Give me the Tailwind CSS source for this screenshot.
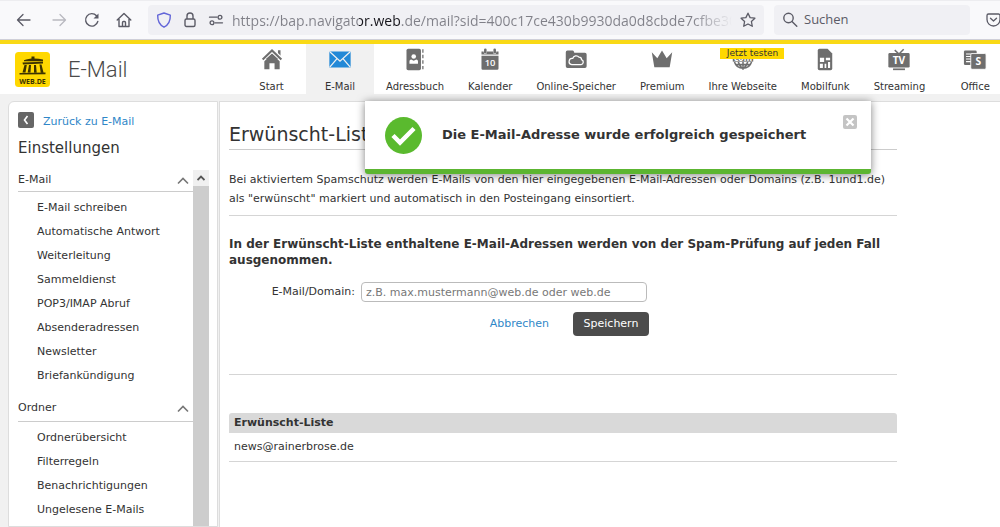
<!DOCTYPE html>
<html lang="de">
<head>
    <meta charset="UTF-8">
    <meta name="viewport" content="width=device-width, initial-scale=1.0">
    <title>E-Mail - Einstellungen</title>
    <script src="https://cdn.jsdelivr.net/npm/@tailwindcss/browser@4"></script>
</head>
<body class="flex flex-col h-screen overflow-hidden bg-[#f1f1f1] text-[#333] font-['DejaVu_Sans',sans-serif] text-[11px]">
    <!-- Browserleiste -->
    <div class="flex shrink-0 items-center h-10 pl-4 bg-[#f9f9fb] border-t border-b border-t-[#ededf0] border-b-[#cfcfd8] overflow-hidden text-[#5b5b66] font-['Open_Sans','Noto_Sans',sans-serif]">
        <button class="w-4 mr-5" aria-label="Zurück">
            <svg class="size-4" viewBox="0 0 16 16" fill="none" stroke="currentColor" stroke-width="1.3" stroke-linecap="round" stroke-linejoin="round"><path d="M14 8H1.5M7 2.5L1.5 8L7 13.500"/></svg>
        </button>
        <button class="w-4 mr-4 text-[#b9b9c0]" aria-label="Vor">
            <svg class="size-4" viewBox="0 0 16 16" fill="none" stroke="currentColor" stroke-width="1.3" stroke-linecap="round" stroke-linejoin="round"><path d="M1 8H13.500M8 2.500L13.500 8L8 13.500"/></svg>
        </button>
        <button class="w-4 mr-4" aria-label="Neu laden">
            <svg class="size-4" viewBox="0 0 16 16" fill="none" stroke="currentColor" stroke-width="1.4" stroke-linecap="round"><path d="M13.800 9.500A6.200 6.200 0 1 1 12.500 3.800"/><path d="M14.500 1.500V6.500H9.500Z" fill="currentColor" stroke="none"/></svg>
        </button>
        <button class="w-4 mr-4" aria-label="Startseite">
            <svg class="size-4" viewBox="0 0 16 16" fill="none" stroke="currentColor" stroke-width="1.4" stroke-linecap="round" stroke-linejoin="round"><path d="M1.200 8L8 1.500L14.800 8M3 7V14.500H13V7M6.500 14.500V10.500a1 1 0 0 1 1-1h1a1 1 0 0 1 1 1v4"/></svg>
        </button>
        <div class="flex flex-1 items-center h-[30px] px-2 rounded bg-[#f0f0f4]">
            <svg class="w-4 h-4 mr-3" viewBox="0 0 16 16" fill="none" stroke="#6265d8" stroke-width="1.4" stroke-linejoin="round"><path d="M8 1L14.300 3.200C14.500 8.500 12.500 12.800 8 15.200C3.500 12.800 1.500 8.500 1.700 3.200Z"/></svg>
            <svg class="w-3 h-4 mr-3" viewBox="0 0 12 16" fill="none" stroke="currentColor" stroke-width="1.4"><rect x="1" y="7" width="10" height="7.500" rx="1.500"/><path d="M3 7V4a3 3 0 0 1 6 0v3"/></svg>
            <svg class="w-4 h-4 mr-2" viewBox="0 0 16 16" fill="none" stroke="currentColor" stroke-width="1.300" stroke-linecap="round"><path d="M1.500 5.200H9M7 10.800H14.500"/><circle cx="12" cy="5.200" r="1.900"/><circle cx="4" cy="10.800" r="1.900"/></svg>
            <input type="text" aria-label="Adresse" value="https://bap.navigator.web.de/mail?sid=400c17ce430b9930da0d8cbde7cfbe30d9bfbae21" class="flex-1 min-w-0 h-6 text-[14px] outline-none text-transparent bg-clip-text bg-[linear-gradient(90deg,#808088_127px,#15141a_127px,#15141a_168px,#808088_168px,#808088_460px,transparent_500px)]">
            <button class="w-4 ml-1" aria-label="Lesezeichen">
                <svg class="size-4" viewBox="0 0 16 16" fill="none" stroke="currentColor" stroke-width="1.300" stroke-linejoin="round"><path d="M8 1.200L10.100 5.600L14.900 6.200L11.400 9.500L12.300 14.300L8 12L3.700 14.300L4.600 9.500L1.100 6.200L5.900 5.600Z"/></svg>
            </button>
        </div>
        <label class="flex items-center w-[196px] h-[30px] ml-[10px] pl-2 rounded bg-[#f0f0f4]">
            <svg class="size-4 mr-[6px]" viewBox="0 0 16 16" fill="none" stroke="currentColor" stroke-width="1.400" stroke-linecap="round"><circle cx="6.500" cy="6" r="4.700"/><path d="M10 9.500L14.800 14.300"/></svg>
            <input type="text" aria-label="Suche" placeholder="Suchen" class="w-32 text-[13px] outline-none placeholder:text-[#5b5b66]">
        </label>
        <button class="w-[14px] ml-4 overflow-hidden" aria-label="Pocket">
            <svg class="w-4 h-4" viewBox="0 0 16 16" fill="none" stroke="currentColor" stroke-width="1.300" stroke-linecap="round" stroke-linejoin="round"><path d="M2.500 2H12.500a1.500 1.500 0 0 1 1.500 1.500V7.500a6.500 6.500 0 0 1-13 0V3.500A1.500 1.500 0 0 1 2.500 2ZM4.500 6.200L7.500 9L10.500 6.200"/></svg>
        </button>
    </div>

    <!-- Kopfbereich -->
    <header class="flex shrink-0 h-[54px] bg-white border-t-4 border-[#f9d916] overflow-hidden">
        <div class="flex items-center w-[237px] shrink-0 pl-[15px]">
            <a href="#" aria-label="WEB.DE">
                <svg class="size-[35px]" viewBox="0 0 35 35"><rect width="35" height="35" rx="3.500" fill="#ffd800"/><g fill="#3c3200"><path d="M16.500 4.500h3v2h-3zM9 8.200C14 6 22 6 28 7.500V9.200H9zM7.500 10.500L28 9.700V11.600L8 12.600zM9.500 13H11.800L10.500 20.500H7.500zM14 13H16L15.500 20.500H12.700zM19 13H21L21.700 20.500H19zM24.500 12.500H26.500L28.500 20.500H25.700zM4.500 21L30.500 20.400V22.200L4.500 22.600z"/></g><text x="17.500" y="31.500" text-anchor="middle" font-family="Open Sans" font-weight="700" font-size="7" fill="#3c3200">WEB.DE</text></svg>
            </a>
            <span class="ml-[18px] font-['Roboto',sans-serif] font-light text-[22px] text-[#4a4a4a]">E-Mail</span>
        </div>
        <nav class="flex shrink-0 text-[10px] text-[#333]">
            <a href="#" class="flex flex-col items-center min-w-[69px] px-3 pt-1">
                <svg class="w-[26px] h-[27px] mb-2" viewBox="0 0 26 27" fill="#6e6e6e"><path d="M20 2.500h3v7l-3-3zM1.500 13L13 2.500L24.500 13" /><path d="M13 5.500L24.500 16L26 14" fill="none"/><path d="M1.500 13.500L13 3L24.500 13.500" fill="none" stroke="#fff" stroke-width="5"/><path d="M2 13.500L13 3L24 13.500" fill="none" stroke="#6e6e6e" stroke-width="2.500"/><path d="M4 15.500L13 7L22 15.500V25H16V18H10V25H4z"/></svg>
                <span>Start</span>
            </a>
            <a href="#" class="flex flex-col items-center min-w-[68px] px-3 pt-1 bg-[#f1f1f1]">
                <svg class="w-[26px] h-[27px] mb-2" viewBox="0 0 26 27"><rect x="0.500" y="4" width="25" height="19" rx="1" fill="#2389d7"/><path d="M1 4.500L13 15.500L25 4.500M1 22.500L9.500 12.500M25 22.500L16.500 12.500" fill="none" stroke="#f1f1f1" stroke-width="1.500"/></svg>
                <span>E-Mail</span>
            </a>
            <a href="#" class="flex flex-col items-center px-3 pt-1">
                <svg class="w-[26px] h-[27px] mb-2" viewBox="0 0 26 27" fill="#6e6e6e"><rect x="3" y="1" width="17" height="25" rx="2"/><path d="M21.500 1.500h1.500v4h-1.500zM21.500 8h1.500v4h-1.500zM21.500 14.500h1.500v4h-1.500zM21.500 21h1.500v4h-1.500z"/><circle cx="11.500" cy="10" r="2.700" fill="#fff"/><path d="M6.500 18.500v-3q0-2 2-2l3 1.500l3-1.500q2 0 2 2v3z" fill="#fff"/></svg>
                <span>Adressbuch</span>
            </a>
            <a href="#" class="flex flex-col items-center px-3 pt-1">
                <svg class="w-[26px] h-[27px] mb-2" viewBox="0 0 26 27" fill="#6e6e6e"><rect x="6" y="0.500" width="3" height="6" rx="1.500"/><rect x="17" y="0.500" width="3" height="6" rx="1.500"/><path d="M3 4h2.500q0 3 2 3t2-3h7q0 3 2 3t2-3H23V7.500H3zM3 9H23V24q0 1.500-1.500 1.500h-17Q3 25.500 3 24z"/><text x="13" y="21.500" text-anchor="middle" font-family="Open Sans" font-size="11" font-weight="600" fill="#fff">10</text></svg>
                <span>Kalender</span>
            </a>
            <a href="#" class="flex flex-col items-center px-3 pt-1">
                <svg class="w-[26px] h-[27px] mb-2" viewBox="0 0 26 27" fill="#6e6e6e"><path d="M1 5q0-2 2-2H9q1 0 1.500 1L11 5.500H23.500Q25.500 5.500 25.500 7.500V21.500Q25.500 23.500 23.500 23.500H3Q1 23.500 1 21.500z"/><path d="M8 19.500h11a3 3 0 0 0 .5-5.800a3 3 0 0 0-3-3a4.200 4.200 0 0 0-7.300 1.500A3.500 3.500 0 0 0 8 19.500z" fill="none" stroke="#fff" stroke-width="1.500"/></svg>
                <span>Online-Speicher</span>
            </a>
            <a href="#" class="flex flex-col items-center px-3 pt-1">
                <svg class="w-[26px] h-[27px] mb-2" viewBox="0 0 26 27" fill="#6e6e6e"><path d="M1 5L7.500 12L13 3L18.500 12L25 5L22 22.500H4z"/></svg>
                <span>Premium</span>
            </a>
            <a href="#" class="relative flex flex-col items-center px-3 pt-1">
                <svg class="w-[26px] h-[27px] mb-2" viewBox="0 0 26 27" fill="none" stroke="#6e6e6e" stroke-width="1.800"><path d="M3 16.500a10.500 10.500 0 0 0 20 0M13 16v9M7.500 16.500q1.500 5 5.500 8.500M18.500 16.500q-1.500 5-5.500 8.500M4.500 19.500H21.500"/><rect x="1" y="9" width="24" height="7" fill="#6e6e6e" stroke="none"/><text x="13" y="15" text-anchor="middle" font-family="Open Sans" font-size="10" font-weight="700" fill="#fff" stroke="none">com</text></svg>
                <span>Ihre Webseite</span>
                <span class="absolute top-1 left-6 w-[64px] h-[11px] bg-[#ffd800] text-center text-[9px] leading-[11px] whitespace-nowrap">Jetzt testen</span>
            </a>
            <a href="#" class="flex flex-col items-center px-3 pt-1">
                <svg class="w-[26px] h-[27px] mb-2" viewBox="0 0 26 27" fill="#6e6e6e"><path d="M4.500 3q0-2 2-2H16L21.500 6.500V24q0 2-2 2h-13q-2 0-2-2z"/><path d="M7 11.500h5v5H7zM14 11.500h5v3h-5zM7 18.500h3.500v5H7zM12.500 18.500h2v5h-2zM16.500 16.500H19v7h-2.500z" fill="#fff"/></svg>
                <span>Mobilfunk</span>
            </a>
            <a href="#" class="flex flex-col items-center px-3 pt-1">
                <svg class="w-[26px] h-[27px] mb-2" viewBox="0 0 26 27" fill="#6e6e6e"><path d="M8 2.500L13 7L18.500 1.500" fill="none" stroke="#6e6e6e" stroke-width="1.800"/><rect x="0.500" y="6" width="25" height="17" rx="1.500"/><rect x="6" y="24" width="14" height="2"/><text x="13" y="19" text-anchor="middle" font-family="Open Sans" font-size="12" font-weight="700" fill="#fff">TV</text></svg>
                <span>Streaming</span>
            </a>
            <a href="#" class="flex flex-col items-center min-w-[76px] px-3 pt-1">
                <svg class="w-[26px] h-[27px] mb-2" viewBox="0 0 26 27" fill="#6e6e6e"><rect y="3" width="15" height="17" rx="1.500"/><path d="M2.500 7h8M2.500 10h6M2.500 13h6M2.500 16h6" stroke="#fff" stroke-width="1.200"/><rect x="8" y="6.500" width="18" height="18.500" rx="1.500" stroke="#fff"/><text x="17" y="20" text-anchor="middle" font-family="Open Sans" font-size="12" font-weight="700" fill="#fff">S</text></svg>
                <span>Office</span>
            </a>
        </nav>
    </header>

    <div class="relative flex flex-1 min-h-0 gap-px pt-[7px] pl-2">
        <!-- Navigation links -->
        <aside class="flex flex-col w-[210px] shrink-0 bg-white border border-[#ddd] rounded-tl-md pl-[9px] pt-2">
            <a href="#" class="flex items-center gap-[9px] text-[#2f87c8]">
                <svg class="size-4 -mt-1" viewBox="0 0 16 16"><rect width="16" height="16" rx="2" fill="#666"/><path d="M9.500 4L6.500 8L9.500 12" fill="none" stroke="#fff" stroke-width="1.600"/></svg>
                <span class="leading-6">Zurück zu E-Mail</span>
            </a>
            <h2 class="mt-1 text-[15px] leading-5">Einstellungen</h2>
            <div class="flex flex-1 min-h-0 mt-3 mr-2">
                <div class="flex-1 overflow-hidden">
                    <button class="flex w-full h-[26px] items-center justify-between pt-0 pb-1 pr-1 border-b border-[#ccc] -mt-1 pt-2">E-Mail
                        <svg class="w-3 h-2" viewBox="0 0 12 8" fill="none" stroke="#777" stroke-width="1.600"><path d="M1 6.500L6 1.500L11 6.500"/></svg>
                    </button>
                    <ul class="pt-1 pl-[19px] leading-6">
                        <li><a href="#">E-Mail schreiben</a></li>
                        <li><a href="#">Automatische Antwort</a></li>
                        <li><a href="#">Weiterleitung</a></li>
                        <li><a href="#">Sammeldienst</a></li>
                        <li><a href="#">POP3/IMAP Abruf</a></li>
                        <li><a href="#">Absenderadressen</a></li>
                        <li><a href="#">Newsletter</a></li>
                        <li><a href="#">Briefankündigung</a></li>
                    </ul>
                    <button class="flex w-full h-[22px] items-center justify-between mt-3 pb-1 pr-1 border-b border-[#ccc]">Ordner
                        <svg class="w-3 h-2" viewBox="0 0 12 8" fill="none" stroke="#777" stroke-width="1.600"><path d="M1 6.500L6 1.500L11 6.500"/></svg>
                    </button>
                    <ul class="pt-1 pl-[19px] leading-6">
                        <li><a href="#">Ordnerübersicht</a></li>
                        <li><a href="#">Filterregeln</a></li>
                        <li><a href="#">Benachrichtigungen</a></li>
                        <li><a href="#">Ungelesene E-Mails</a></li>
                    </ul>
                </div>
                <div class="w-4 bg-[#cdcdcd]">
                    <div class="flex items-center justify-center h-4 bg-[#f0f0f0]">
                        <svg class="w-2 h-2" viewBox="0 0 8 8" fill="none" stroke="#555" stroke-width="1.800"><path d="M0.500 6L4 2.500L7.500 6"/></svg>
                    </div>
                </div>
            </div>
        </aside>

        <!-- Inhalt -->
        <main class="flex-1 bg-white border-t border-l border-[#ddd] pl-[9px]">
            <div class="max-w-[668px]">
                <h1 class="h-12 pt-5 text-[19px] leading-6 border-b border-[#ccc]">Erwünscht-Liste</h1>
                <p class="pt-5 pb-[7px] leading-[19px] border-b border-[#d5d5d5]">Bei aktiviertem Spamschutz werden E-Mails von den hier eingegebenen E-Mail-Adressen oder Domains (z.B. 1und1.de)<br>als "erwünscht" markiert und automatisch in den Posteingang einsortiert.</p>
                <p class="mt-5 text-[12px] leading-4 font-bold">In der Erwünscht-Liste enthaltene E-Mail-Adressen werden von der Spam-Prüfung auf jeden Fall ausgenommen.</p>
                <form class="mt-[14px] pb-[38px] border-b border-[#d5d5d5]">
                    <div class="flex items-center">
                        <label for="domain" class="w-[126px] mr-[6px] text-right">E-Mail/Domain:</label>
                        <input id="domain" type="text" placeholder="z.B. max.mustermann@web.de oder web.de" class="w-[286px] h-5 px-1 border border-[#bbb] rounded placeholder:text-[#777]">
                    </div>
                    <div class="flex items-center justify-end w-[420px] mt-[10px] gap-6">
                        <a href="#" class="text-[#2f87c8]">Abbrechen</a>
                        <button type="button" class="h-6 w-[76px] rounded bg-[#4c4c4c] text-white">Speichern</button>
                    </div>
                </form>
                <table class="w-full mt-[38px] text-left">
                    <thead>
                        <tr><th class="h-5 px-[5px] bg-[#d9d9d9] rounded-t-[3px] font-bold">Erwünscht-Liste</th></tr>
                    </thead>
                    <tbody>
                        <tr><td class="h-7 px-[5px] border-b border-[#d5d5d5]">news@rainerbrose.de</td></tr>
                    </tbody>
                </table>
            </div>
        </main>

        <!-- Erfolgsmeldung -->
        <div role="status" class="absolute top-[7px] left-[365px] w-[506px] h-[73px] flex items-center pl-5 bg-white border-b-5 border-[#5cb531] rounded-b-[3px] shadow-[0_1px_9px_rgba(0,0,0,0.5)]">
            <svg class="size-[37px]" viewBox="0 0 37 37"><circle cx="18.500" cy="18.500" r="18.500" fill="#5aba2e"/><path d="M8 18.500L15 25.500L29 11.500" fill="none" stroke="#fff" stroke-width="4.500"/></svg>
            <strong class="ml-5 text-[13px]">Die E-Mail-Adresse wurde erfolgreich gespeichert</strong>
            <button class="absolute top-[14px] right-[14px]" aria-label="Schließen">
                <svg class="size-[14px]" viewBox="0 0 14 14"><rect width="14" height="14" rx="2" fill="#c4c4c4"/><path d="M3.500 3.500L10.500 10.500M10.500 3.500L3.500 10.500" stroke="#fff" stroke-width="2.200"/></svg>
            </button>
        </div>
    </div>
</body>
</html>
